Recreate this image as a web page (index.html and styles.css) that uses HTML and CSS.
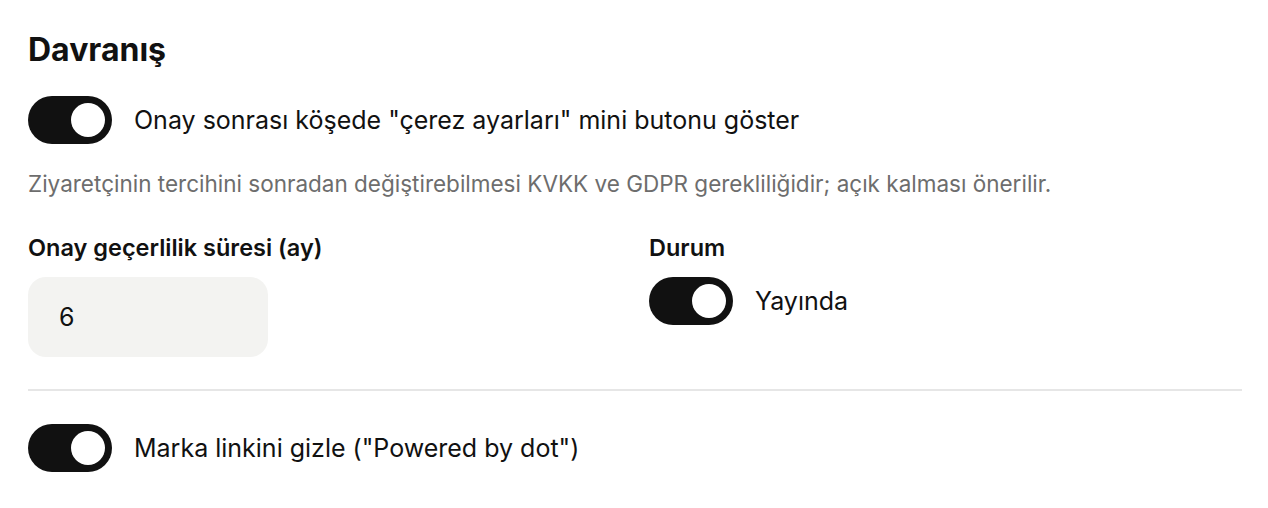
FILE: index.html
```html
<!DOCTYPE html>
<html lang="tr">
<head>
<meta charset="utf-8">
<title>Davranış</title>
<link rel="stylesheet" href="styles.css">
</head>
<body>
<section class="panel">
  <h2 class="title">Davranış</h2>

  <label class="switch-row first">
    <span class="switch on"><span class="knob"></span></span>
    <span class="switch-label">Onay sonrası köşede "çerez ayarları" mini butonu göster</span>
  </label>
  <p class="help">Ziyaretçinin tercihini sonradan değiştirebilmesi KVKK ve GDPR gerekliliğidir; açık kalması önerilir.</p>

  <div class="grid">
    <div class="field">
      <div class="field-label">Onay geçerlilik süresi (ay)</div>
      <div class="input">6</div>
    </div>
    <div class="field">
      <div class="field-label">Durum</div>
      <label class="switch-row">
        <span class="switch on"><span class="knob"></span></span>
        <span class="switch-label">Yayında</span>
      </label>
    </div>
  </div>

  <hr class="divider">

  <label class="switch-row">
    <span class="switch on"><span class="knob"></span></span>
    <span class="switch-label">Marka linkini gizle ("Powered by dot")</span>
  </label>
</section>
</body>
</html>
```

FILE: styles.css
```css
html, body {
  margin: 0;
  padding: 0;
  background: #ffffff;
}

body {
  font-family: Inter, "Noto Sans", sans-serif;
  color: #111111;
}

.panel {
  padding: 31px 26px 0 28px;
}

.title {
  margin: 0;
  font-size: 32px;
  line-height: 38px;
  font-weight: 700;
}

.switch-row {
  display: flex;
  align-items: center;
  gap: 22px;
}

.switch-row.first {
  margin-top: 27px;
}

.switch {
  flex: none;
  width: 84px;
  height: 48px;
  border-radius: 24px;
  background: #111111;
  display: flex;
  align-items: center;
  justify-content: flex-end;
  padding: 0 7px;
  box-sizing: border-box;
}

.knob {
  width: 34px;
  height: 34px;
  border-radius: 50%;
  background: #ffffff;
}

.switch-label {
  font-size: 25px;
  line-height: 30px;
}

.help {
  margin: 25px 0 0;
  font-size: 22.5px;
  line-height: 30px;
  color: #6d6d6d;
}

.grid {
  margin-top: 35px;
  display: grid;
  grid-template-columns: 1fr 1fr;
  gap: 28px;
}

.field-label {
  font-size: 23.5px;
  line-height: 28px;
  font-weight: 600;
  margin-bottom: 15px;
}

.input {
  width: 240px;
  height: 80px;
  box-sizing: border-box;
  border-radius: 18px;
  background: #f3f3f1;
  padding: 0 31px;
  display: flex;
  align-items: center;
  font-size: 25px;
}

.divider {
  margin: 32px 0 33px;
  border: 0;
  height: 2px;
  background: #e6e6e6;
}
```
